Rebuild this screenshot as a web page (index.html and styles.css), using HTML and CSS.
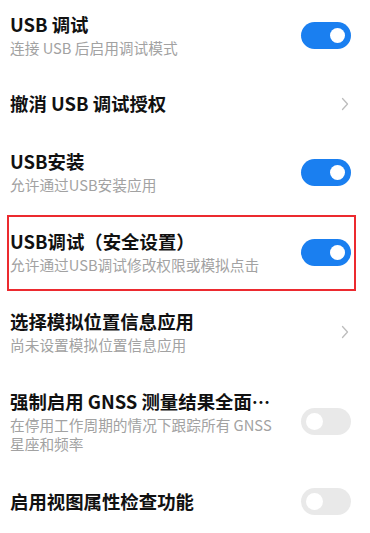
FILE: index.html
```html
<!DOCTYPE html>
<html lang="zh-CN">
<head>
    <meta charset="UTF-8">
    <meta name="viewport" content="width=device-width, initial-scale=1.0">
    <title>开发者选项</title>
    <link rel="stylesheet" href="styles.css">
</head>
<body>
    <div class="list">
        <div class="row">
            <div class="text">
                <div class="title">USB 调试</div>
                <div class="sub">连接 USB 后启用调试模式</div>
            </div>
            <div class="toggle on"><span class="knob"></span></div>
        </div>

        <div class="row single">
            <div class="text">
                <div class="title">撤消 USB 调试授权</div>
            </div>
            <svg class="chevron" width="8" height="14" viewBox="0 0 8 14">
                <path d="M1.5 1.5 L6.5 7 L1.5 12.5" fill="none" stroke="#bdbdbd" stroke-width="1.3" stroke-linecap="round" stroke-linejoin="round"/>
            </svg>
        </div>

        <div class="row">
            <div class="text">
                <div class="title">USB安装</div>
                <div class="sub">允许通过USB安装应用</div>
            </div>
            <div class="toggle on"><span class="knob"></span></div>
        </div>

        <div class="row marked">
            <div class="text">
                <div class="title">USB调试（安全设置）</div>
                <div class="sub">允许通过USB调试修改权限或模拟点击</div>
            </div>
            <div class="toggle on"><span class="knob"></span></div>
        </div>

        <div class="row">
            <div class="text">
                <div class="title">选择模拟位置信息应用</div>
                <div class="sub">尚未设置模拟位置信息应用</div>
            </div>
            <svg class="chevron" width="8" height="14" viewBox="0 0 8 14">
                <path d="M1.5 1.5 L6.5 7 L1.5 12.5" fill="none" stroke="#bdbdbd" stroke-width="1.3" stroke-linecap="round" stroke-linejoin="round"/>
            </svg>
        </div>

        <div class="row">
            <div class="text">
                <div class="title">强制启用 GNSS 测量结果全面…</div>
                <div class="sub">在停用工作周期的情况下跟踪所有 GNSS 星座和频率</div>
            </div>
            <div class="toggle"><span class="knob"></span></div>
        </div>

        <div class="row single">
            <div class="text">
                <div class="title">启用视图属性检查功能</div>
            </div>
            <div class="toggle"><span class="knob"></span></div>
        </div>
    </div>
</body>
</html>
```

FILE: styles.css
```css
body {
    margin: 0;
    background-color: #fff;
    font-family: "Noto Sans CJK SC", "Noto Sans", sans-serif;
    overflow: hidden;
}

.list {
    margin-top: -5px;
}

.row {
    position: relative;
    display: flex;
    align-items: center;
    padding: 18px 19px 18px 10px;
}

.row.single {
    padding-top: 17px;
    padding-bottom: 17px;
}

.row.marked::after {
    content: "";
    position: absolute;
    top: 3px;
    right: 14px;
    bottom: 1px;
    left: 7px;
    border: 2px solid #ec2a2f;
}

.text {
    flex: 1;
    min-width: 0;
    padding-right: 24px;
}

.title {
    font-size: 18.4px;
    font-weight: 700;
    line-height: 23px;
    color: #111;
    white-space: nowrap;
}

.sub {
    margin-top: 2px;
    font-size: 14.7px;
    line-height: 19px;
    color: #a2a2a2;
}

.toggle {
    position: relative;
    flex: none;
    width: 50px;
    height: 27px;
    border-radius: 14px;
    background-color: #e9e9e9;
}

.toggle .knob {
    position: absolute;
    top: 5px;
    left: 5px;
    width: 17px;
    height: 17px;
    border-radius: 50%;
    background-color: #fff;
}

.toggle.on {
    background-color: #1a7ff0;
}

.toggle.on .knob {
    top: 6px;
    left: auto;
    right: 6px;
    width: 15px;
    height: 15px;
}

.chevron {
    flex: none;
    margin-right: 2px;
}
```
